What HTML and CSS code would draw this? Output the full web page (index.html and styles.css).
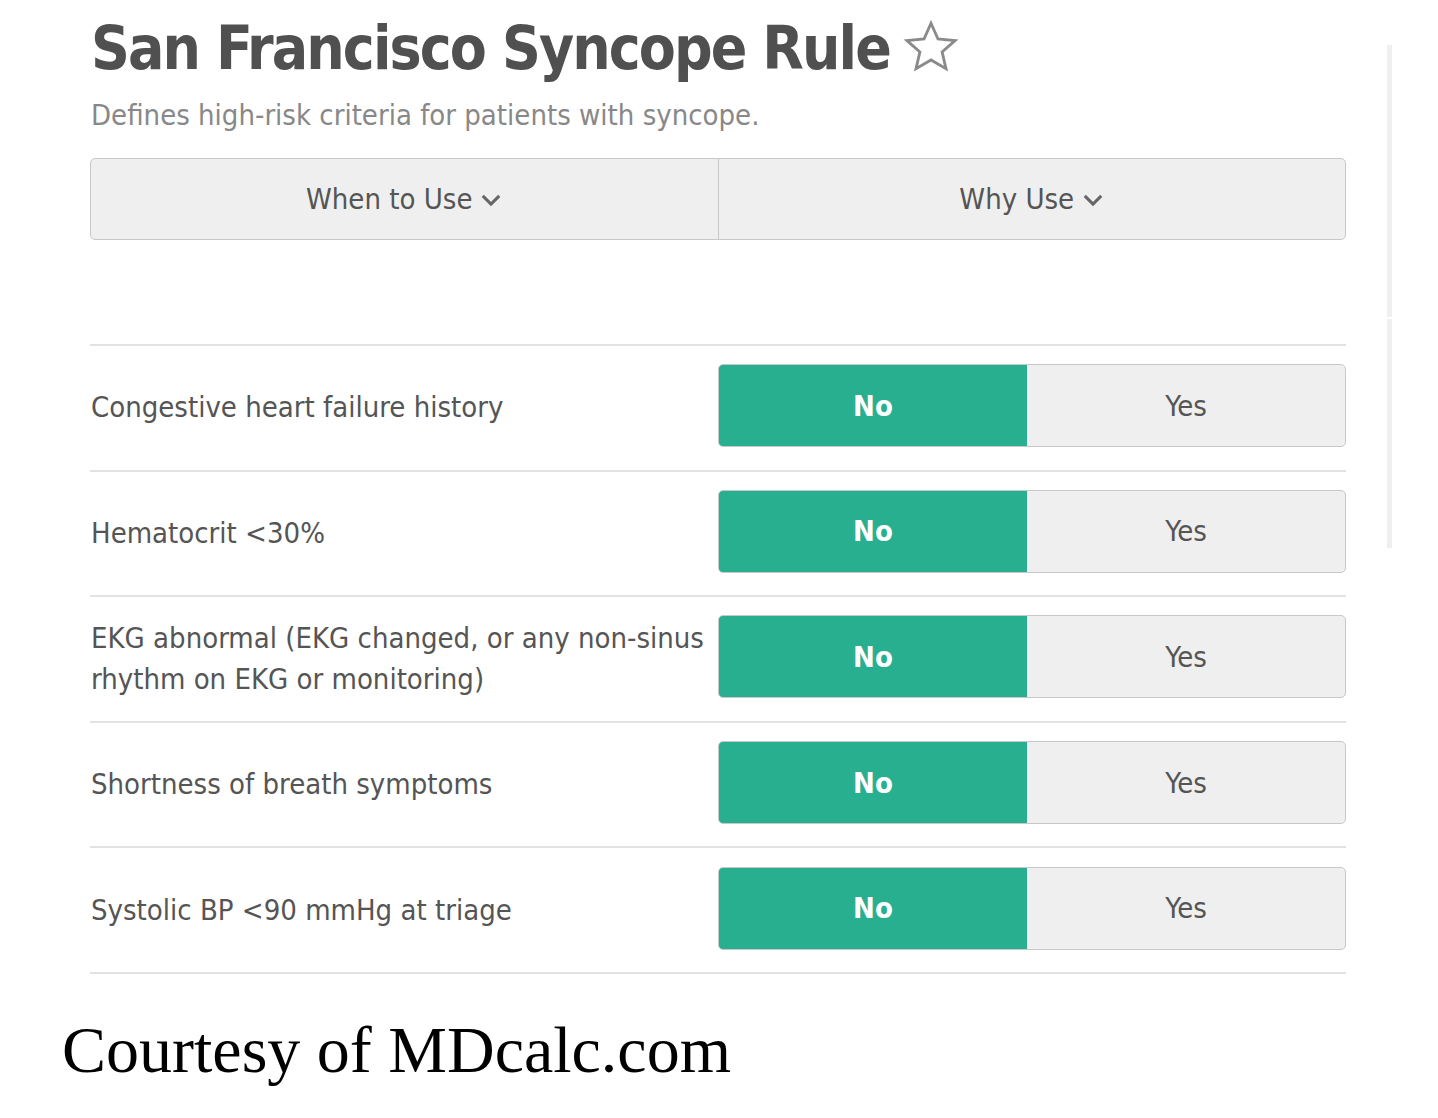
FILE: index.html
```html
<!DOCTYPE html>
<html lang="en">
<head>
  <meta charset="UTF-8">
  <title>San Francisco Syncope Rule</title>
  <link rel="stylesheet" href="styles.css">
</head>
<body>
  <div class="page">
    <div class="calc">
      <h1 class="title">San Francisco Syncope Rule
        <svg class="star" viewBox="0 0 24 24" width="62" height="62"><path d="M12 2.8l2.7 6.1 6.6.6-5 4.4 1.5 6.5L12 17l-5.8 3.4 1.5-6.5-5-4.4 6.6-.6z" fill="none" stroke="#8a8a8a" stroke-width="1.1" stroke-linejoin="miter"/></svg>
      </h1>
      <p class="subtitle">Defines high-risk criteria for patients with syncope.</p>

      <div class="tabs">
        <div class="tab">When to Use <svg class="chev" viewBox="0 0 16 10" width="22" height="14"><path d="M2 2l6 6 6-6" fill="none" stroke="#666" stroke-width="2.2"/></svg></div>
        <div class="tab">Why Use <svg class="chev" viewBox="0 0 16 10" width="22" height="14"><path d="M2 2l6 6 6-6" fill="none" stroke="#666" stroke-width="2.2"/></svg></div>
      </div>

      <div class="rows">
        <div class="row">
          <div class="label">Congestive heart failure history</div>
          <div class="toggle"><span class="opt on">No</span><span class="opt">Yes</span></div>
        </div>
        <div class="row">
          <div class="label">Hematocrit &lt;30%</div>
          <div class="toggle"><span class="opt on">No</span><span class="opt">Yes</span></div>
        </div>
        <div class="row">
          <div class="label">EKG abnormal (EKG changed, or any <span class="nowrap">non-sinus</span> rhythm on EKG or monitoring)</div>
          <div class="toggle"><span class="opt on">No</span><span class="opt">Yes</span></div>
        </div>
        <div class="row">
          <div class="label">Shortness of breath symptoms</div>
          <div class="toggle"><span class="opt on">No</span><span class="opt">Yes</span></div>
        </div>
        <div class="row">
          <div class="label">Systolic BP &lt;90 mmHg at triage</div>
          <div class="toggle"><span class="opt on">No</span><span class="opt">Yes</span></div>
        </div>
      </div>
    </div>
    <div class="side">
      <div class="bar"></div>
      <div class="bar"></div>
    </div>
  </div>
  <p class="credit">Courtesy of MDcalc.com</p>
</body>
</html>
```

FILE: styles.css
```css
body {
  margin: 0;
  background-color: #fff;
  font-family: "DejaVu Sans Condensed", "Liberation Sans", sans-serif;
  color: #555;
}

.page {
  display: flex;
  align-items: flex-start;
}

.calc {
  width: 1256px;
  margin-left: 90px;
}

.title {
  margin: 12px 0 0 1px;
  font-size: 60px;
  letter-spacing: -1.9px;
  font-weight: bold;
  color: #505050;
  line-height: 72px;
  display: flex;
  align-items: center;
  gap: 10px;
}

.star {
  margin-top: -2px;
}

.subtitle {
  margin: 13px 0 0 1px;
  font-size: 29px;
  color: #888;
  line-height: 36px;
}

.tabs {
  display: flex;
  margin-top: 25px;
  height: 80px;
  border: 1px solid #c8c8c8;
  border-radius: 5px;
  background-color: #efefef;
}

.tab {
  flex: 1;
  display: flex;
  align-items: center;
  justify-content: center;
  gap: 8px;
  font-size: 29px;
  color: #555;
}

.tab + .tab {
  border-left: 1px solid #c8c8c8;
}

.chev {
  margin-top: 2px;
}

.rows {
  margin-top: 104px;
  border-top: 2px solid #e2e2e2;
}

.row {
  display: flex;
  align-items: center;
  height: 123.6px;
  border-bottom: 2px solid #e2e2e2;
}

.label {
  flex: 1;
  padding-left: 1px;
  padding-right: 6px;
  font-size: 29px;
  line-height: 41px;
  color: #555;
}

.nowrap {
  white-space: nowrap;
}

.toggle {
  display: flex;
  width: 626px;
  height: 81px;
  margin-bottom: 4px;
  border: 1px solid #c8c8c8;
  border-radius: 5px;
  overflow: hidden;
  background-color: #efefef;
}

.opt {
  flex: 1;
  display: flex;
  align-items: center;
  justify-content: center;
  font-size: 29px;
  color: #555;
}

.opt.on {
  flex: 0 0 308px;
  background-color: #28af90;
  color: #fff;
  font-weight: bold;
}

.side {
  margin-left: 41px;
  margin-top: 45px;
  display: flex;
  flex-direction: column;
  gap: 2px;
}

.bar {
  width: 5px;
  height: 272px;
  background-color: #efefef;
}

.bar + .bar {
  height: 229px;
}

.credit {
  margin: 38px 0 0 62px;
  font-family: "Liberation Serif", serif;
  font-size: 66px;
  line-height: 76px;
  color: #000;
}
```
